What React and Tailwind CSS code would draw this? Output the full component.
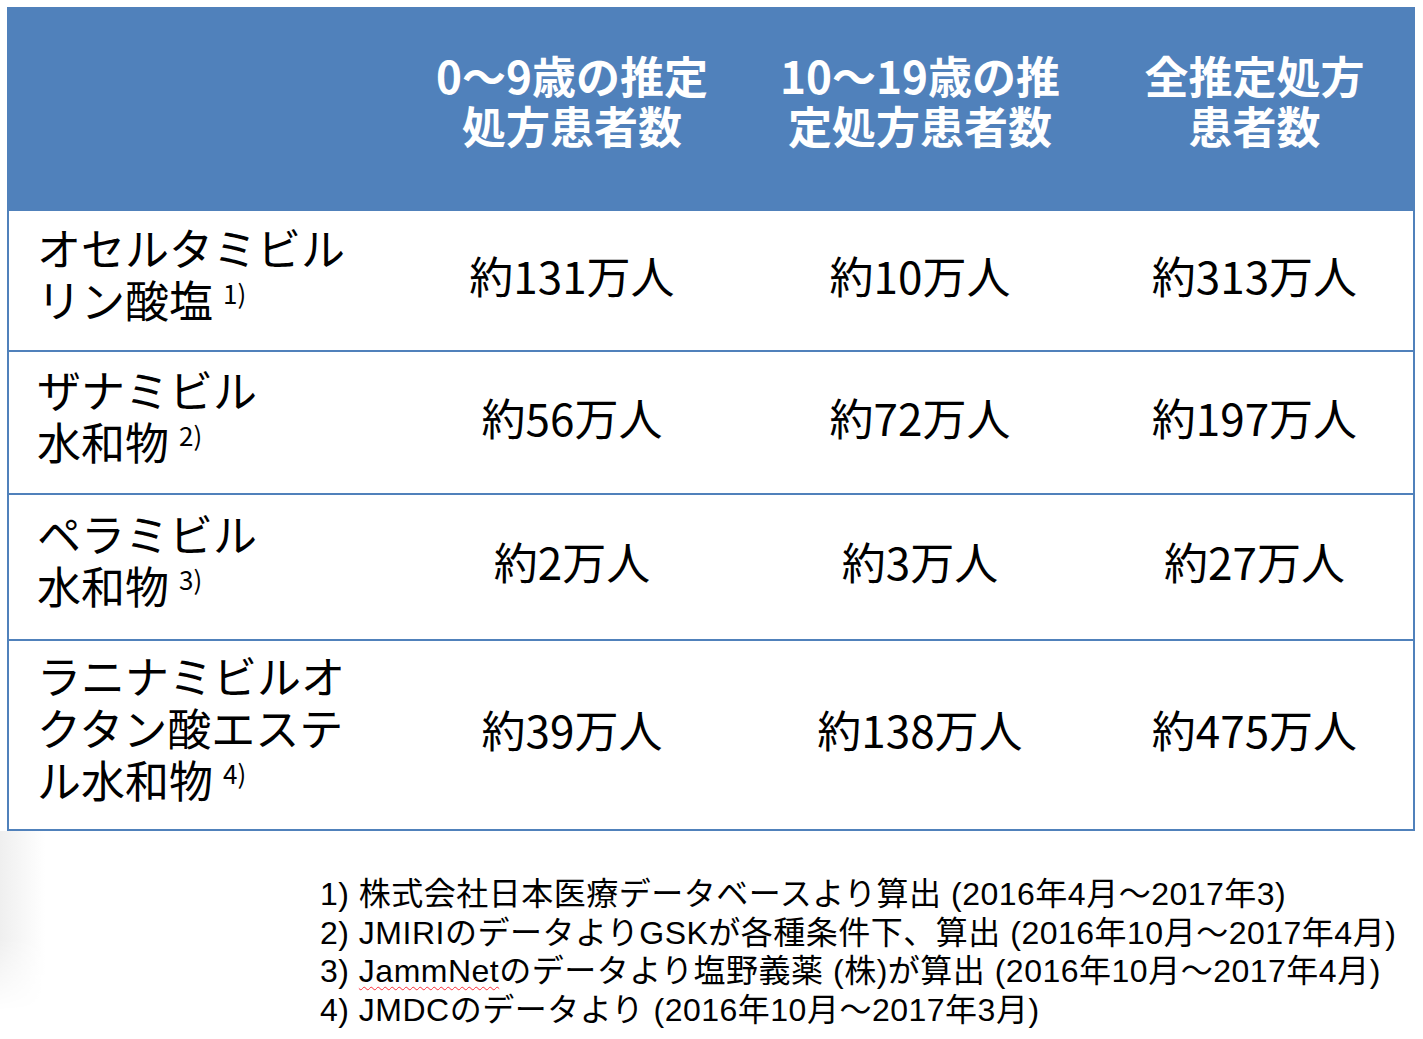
import React from "react";

const jp = { fontFamily: '"Noto Sans CJK JP", sans-serif' };

const rows = [
  { label: ["オセルタミビル", "リン酸塩"], note: "1)", vals: ["約131万人", "約10万人", "約313万人"], h: "h-[141px]" },
  { label: ["ザナミビル", "水和物"], note: "2)", vals: ["約56万人", "約72万人", "約197万人"], h: "h-[143px]" },
  { label: ["ペラミビル", "水和物"], note: "3)", vals: ["約2万人", "約3万人", "約27万人"], h: "h-[146px]" },
  { label: ["ラニナミビルオ", "クタン酸エステ", "ル水和物"], note: "4)", vals: ["約39万人", "約138万人", "約475万人"], h: "h-[188px]" },
];

function Row({ r, last }) {
  return (
    <div className={`grid grid-cols-[391px_344px_352px_1fr] ${r.h} ${last ? "" : "border-b-2 border-[#5081bb]"} bg-white`}>
      <div className="flex flex-col justify-center pl-[28px] pb-[16px] text-[44px] leading-[52px] text-black">
        {r.label.map((l, i) => (
          <div key={i} className="whitespace-nowrap">
            {l}
            {i === r.label.length - 1 && (
              <span className="ml-[10px] align-[14px] text-[26px] leading-none">{r.note}</span>
            )}
          </div>
        ))}
      </div>
      {r.vals.map((v, i) => (
        <div key={i} className="flex items-center justify-center pb-[12px] text-[44px] leading-[52px] text-black">
          {v}
        </div>
      ))}
    </div>
  );
}

export default function App() {
  return (
    <div className="w-[1423px] h-[1039px] bg-white overflow-hidden" style={jp}>
      <div className="pt-[7px] pl-[7px]">
        <div className="w-[1408px] border-2 border-[#5081bb]">
          <div className="grid grid-cols-[391px_344px_352px_1fr] h-[202px] bg-[#5081bb] text-white font-bold text-[44px] leading-[50px]">
            <div />
            <div className="flex flex-col items-center pt-[41px]">
              <div>0〜9歳の推定</div>
              <div>処方患者数</div>
            </div>
            <div className="flex flex-col items-center pt-[41px]">
              <div>10〜19歳の推</div>
              <div>定処方患者数</div>
            </div>
            <div className="flex flex-col items-center pt-[41px]">
              <div>全推定処方</div>
              <div>患者数</div>
            </div>
          </div>
          {rows.map((r, i) => (
            <Row key={i} r={r} last={i === rows.length - 1} />
          ))}
        </div>
      </div>
      <div className="flex">
        <div className="w-[45px] h-[180px] bg-gradient-to-r from-[#efefef] via-[#f7f7f7] to-white [mask-image:linear-gradient(to_bottom,black_60%,transparent)]" />
        <div
          className="ml-[275px] mt-[44px] text-[32px] leading-[38.5px] text-black whitespace-nowrap"
          style={{ fontFamily: '"Liberation Sans", "Noto Sans CJK JP", sans-serif', letterSpacing: "0.5px" }}
        >
          <div>1) 株式会社日本医療データベースより算出 (2016年4月～2017年3)</div>
          <div>2) JMIRIのデータよりGSKが各種条件下、算出 (2016年10月～2017年4月)</div>
          <div>
            3) <span className="underline decoration-wavy decoration-red-500 decoration-1 underline-offset-4">JammNet</span>のデータより塩野義薬 (株)が算出 (2016年10月～2017年4月)
          </div>
          <div>4) JMDCのデータより (2016年10月～2017年3月)</div>
        </div>
      </div>
    </div>
  );
}
